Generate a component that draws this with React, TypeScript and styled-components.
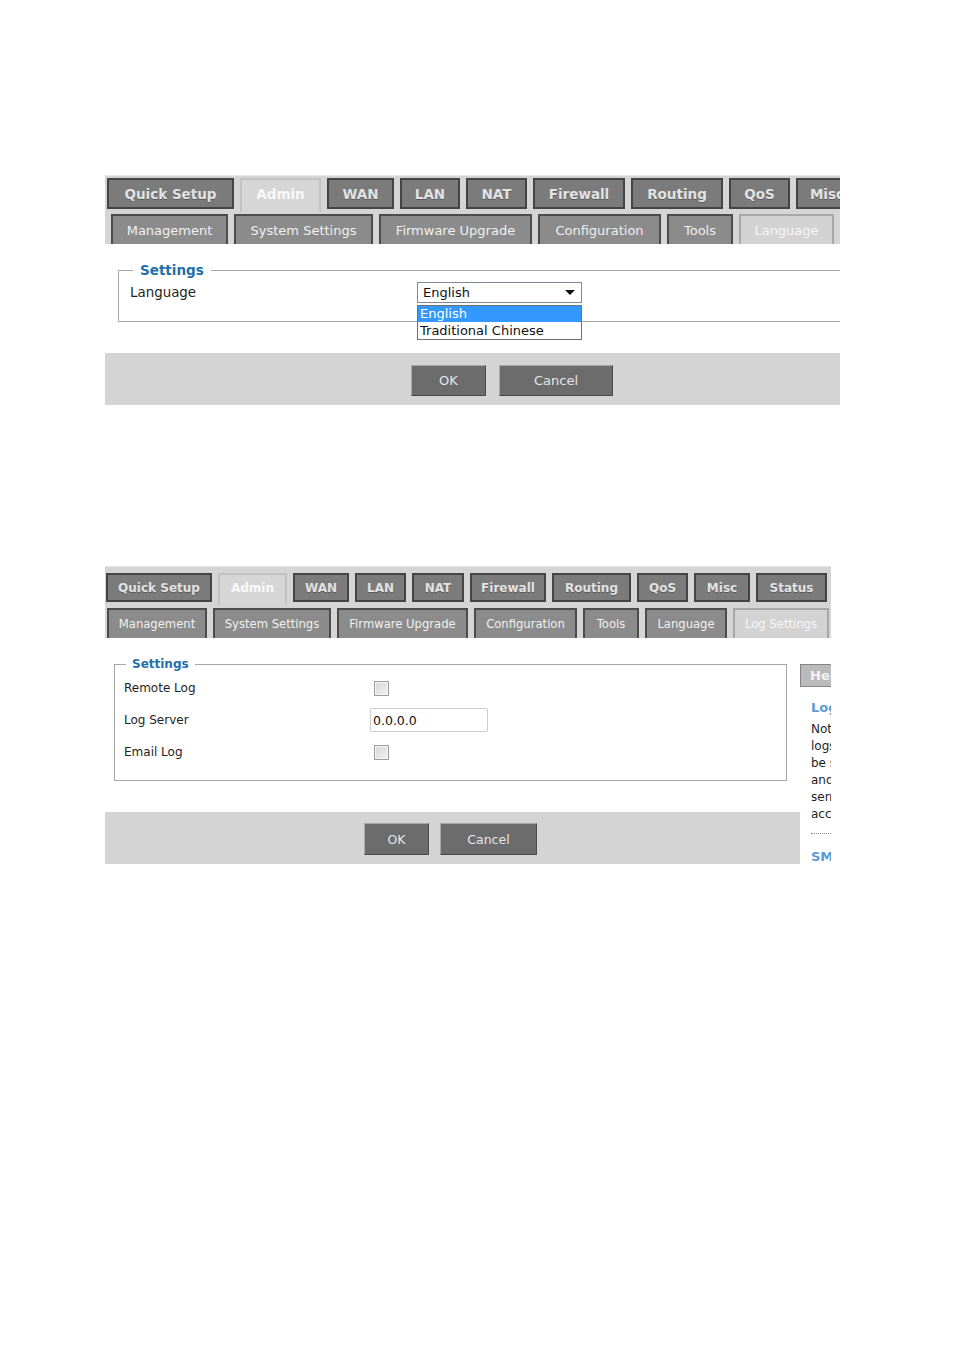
import React from 'react';
import styled, {createGlobalStyle} from 'styled-components';

const GlobalStyle = createGlobalStyle`
  html, body {
    margin: 0;
    padding: 0;
    background: #ffffff;
  }
  body {
    font-family: "DejaVu Sans", Verdana, sans-serif;
    color: #1c1c1c;
  }
`;

type Tab = {label: string; width: number};

type Scale = {
  tabFont: number;
  subFont: number;
  bodyFont: number;
  legendFont: number;
};

const large: Scale = {tabFont: 13.5, subFont: 13, bodyFont: 13.4, legendFont: 13.5};
const small: Scale = {tabFont: 12, subFont: 11.6, bodyFont: 12, legendFont: 12};

const Page = styled.div`
  display: flex;
  flex-direction: column;
  gap: 161px;
  padding: 175px 0 0 105px;
`;

const Panel = styled.section<{$width: number}>`
  width: ${p => p.$width}px;
  overflow: hidden;
`;

const TabStrip = styled.div<{$padTop: number; $gap: number}>`
  display: flex;
  flex-direction: column;
  gap: ${p => p.$gap}px;
  padding-top: ${p => p.$padTop}px;
  background: #d5d5d5;
  border-top: 1px solid #e6e6e6;
`;

const TabRow = styled.div<{$indent: number; $height: number}>`
  display: flex;
  gap: 6px;
  height: ${p => p.$height}px;
  padding-left: ${p => p.$indent}px;
`;

const MainTab = styled.div<{$width: number; $active?: boolean; $font: number}>`
  flex: 0 0 ${p => p.$width}px;
  box-sizing: border-box;
  display: flex;
  align-items: center;
  justify-content: center;
  white-space: nowrap;
  font-size: ${p => p.$font}px;
  font-weight: bold;
  color: ${p => (p.$active ? '#f9f9f9' : '#e2e2e2')};
  background: ${p => (p.$active ? '#d6d6d6' : '#7b7b7b')};
  border: 2px solid ${p => (p.$active ? '#c2c2c2' : '#444444')};
  border-bottom-color: ${p => (p.$active ? '#d6d6d6' : '#444444')};
  padding-bottom: ${p => (p.$active ? 3 : 0)}px;
  margin-bottom: ${p => (p.$active ? -4 : 0)}px;
  text-shadow: ${p => (p.$active ? 'none' : '0 1px 0 #5a5a5a')};
`;

const SubTab = styled.div<{$width: number; $active?: boolean; $font: number}>`
  flex: 0 0 ${p => p.$width}px;
  box-sizing: border-box;
  display: flex;
  align-items: center;
  justify-content: center;
  white-space: nowrap;
  font-size: ${p => p.$font}px;
  color: ${p => (p.$active ? '#f6f6f6' : '#f0f0f0')};
  background: ${p => (p.$active ? '#d3d3d3' : '#8b8b8b')};
  border: 2px solid ${p => (p.$active ? '#a8a8a8' : '#4c4c4c')};
  border-bottom: none;
`;

const Body = styled.div`
  display: flex;
  align-items: flex-start;
`;

const MainColumn = styled.div<{$width: number}>`
  flex: 0 0 ${p => p.$width}px;
`;

const Fieldset = styled.fieldset<{
  $left: number;
  $width: number;
  $top: number;
  $padLeft: number;
  $padBottom: number;
}>`
  box-sizing: border-box;
  width: ${p => p.$width}px;
  min-inline-size: 0;
  margin: ${p => p.$top}px 0 0 ${p => p.$left}px;
  padding: 0 0 ${p => p.$padBottom}px ${p => p.$padLeft}px;
  border: 1px solid #a6a6a6;
`;

const Legend = styled.legend<{$font: number; $offset: number; $pad: number}>`
  margin-left: ${p => p.$offset}px;
  padding: 0 ${p => p.$pad}px;
  font-size: ${p => p.$font}px;
  line-height: 16px;
  font-weight: bold;
  color: #1f70aa;
`;

const FieldRow = styled.div<{$height: number}>`
  display: flex;
  align-items: center;
  height: ${p => p.$height}px;
`;

const FieldLabel = styled.div<{$width: number; $font: number}>`
  flex: 0 0 ${p => p.$width}px;
  font-size: ${p => p.$font}px;
  color: #1e1e1e;
`;

const SelectBox = styled.div`
  position: relative;
  box-sizing: border-box;
  width: 165px;
  height: 21px;
  display: flex;
  align-items: center;
  justify-content: space-between;
  padding: 0 5px 0 5px;
  border: 1px solid #7d8a96;
  background: #ffffff;
  font-size: 13px;
  color: #111;
`;

const Caret = styled.span`
  width: 0;
  height: 0;
  margin-right: 1px;
  border-left: 5px solid transparent;
  border-right: 5px solid transparent;
  border-top: 5px solid #111;
`;

const OptionList = styled.div`
  position: absolute;
  top: 22px;
  left: -1px;
  width: 165px;
  box-sizing: border-box;
  border: 1px solid #707070;
  background: #ffffff;
  z-index: 2;
`;

const OptionItem = styled.div<{$selected?: boolean}>`
  height: ${p => (p.$selected ? 16 : 17)}px;
  line-height: ${p => (p.$selected ? 16 : 17)}px;
  padding-left: 2px;
  font-size: 13px;
  white-space: nowrap;
  color: ${p => (p.$selected ? '#ffffff' : '#111111')};
  background: ${p => (p.$selected ? '#3399ff' : '#ffffff')};
`;

const Checkbox = styled.span`
  box-sizing: border-box;
  width: 15px;
  height: 15px;
  margin-left: 4px;
  border: 1px solid #9c9c9c;
  box-shadow: inset 0 0 0 1px #f4f4f4;
  background: linear-gradient(135deg, #d6d6d6, #f2f2f2);
`;

const TextInput = styled.div`
  box-sizing: border-box;
  width: 118px;
  height: 24px;
  display: flex;
  align-items: center;
  padding-left: 2px;
  border: 1px solid #cdcdcd;
  border-radius: 2px;
  font-size: 12.5px;
  color: #111;
`;

const ButtonBar = styled.div<{$top: number; $padTop: number; $padLeft: number; $gap: number}>`
  display: flex;
  gap: ${p => p.$gap}px;
  height: 52px;
  box-sizing: border-box;
  margin-top: ${p => p.$top}px;
  padding: ${p => p.$padTop}px 0 0 ${p => p.$padLeft}px;
  background: #d4d4d4;
`;

const Button = styled.div<{$width: number; $height: number; $font: number}>`
  box-sizing: border-box;
  width: ${p => p.$width}px;
  height: ${p => p.$height}px;
  display: flex;
  align-items: center;
  justify-content: center;
  font-size: ${p => p.$font}px;
  color: #e6e6e6;
  background: #6c6c6c;
  border: 1px solid;
  border-color: #a8a8a8 #4a4a4a #4a4a4a #a8a8a8;
`;

const HelpColumn = styled.aside`
  flex: 0 0 60px;
  padding-top: 26px;
  font-size: 12px;
`;

const HelpButton = styled.div`
  box-sizing: border-box;
  width: 60px;
  height: 23px;
  padding-left: 9px;
  line-height: 21px;
  font-size: 13px;
  font-weight: bold;
  color: #f4f4f4;
  background: #bababa;
  border: 1px solid #858585;
`;

const HelpTitle = styled.div<{$top: number}>`
  margin-top: ${p => p.$top}px;
  padding-left: 11px;
  line-height: 16px;
  font-size: 13px;
  font-weight: bold;
  color: #5b9bd3;
  white-space: nowrap;
`;

const HelpText = styled.div`
  margin-top: 5px;
  padding-left: 11px;
  line-height: 17px;
  white-space: nowrap;
  color: #1e1e1e;
`;

const HelpRule = styled.div`
  width: 30px;
  margin: 10px 0 0 11px;
  border-top: 1px dotted #8a8a8a;
`;

const mainTabs1: Tab[] = [
  {label: 'Quick Setup', width: 127},
  {label: 'Admin', width: 81},
  {label: 'WAN', width: 67},
  {label: 'LAN', width: 60},
  {label: 'NAT', width: 61},
  {label: 'Firewall', width: 92},
  {label: 'Routing', width: 92},
  {label: 'QoS', width: 61},
  {label: 'Misc', width: 62},
];

const subTabs1: Tab[] = [
  {label: 'Management', width: 117},
  {label: 'System Settings', width: 139},
  {label: 'Firmware Upgrade', width: 153},
  {label: 'Configuration', width: 123},
  {label: 'Tools', width: 66},
  {label: 'Language', width: 95},
];

const mainTabs2: Tab[] = [
  {label: 'Quick Setup', width: 106},
  {label: 'Admin', width: 69},
  {label: 'WAN', width: 56},
  {label: 'LAN', width: 51},
  {label: 'NAT', width: 52},
  {label: 'Firewall', width: 76},
  {label: 'Routing', width: 79},
  {label: 'QoS', width: 51},
  {label: 'Misc', width: 56},
  {label: 'Status', width: 71},
];

const subTabs2: Tab[] = [
  {label: 'Management', width: 100},
  {label: 'System Settings', width: 118},
  {label: 'Firmware Upgrade', width: 131},
  {label: 'Configuration', width: 103},
  {label: 'Tools', width: 56},
  {label: 'Language', width: 82},
  {label: 'Log Settings', width: 96},
];

type TabsProps = {
  main: Tab[];
  sub: Tab[];
  activeMain: string;
  activeSub: string;
  scale: Scale;
  padTop: number;
  gap: number;
  mainHeight: number;
  subHeight: number;
  mainIndent: number;
  subIndent: number;
};

function TabBar(props: TabsProps) {
  const {main, sub, activeMain, activeSub, scale} = props;
  return (
    <TabStrip $padTop={props.padTop} $gap={props.gap}>
      <TabRow $indent={props.mainIndent} $height={props.mainHeight}>
        {main.map(t => (
          <MainTab
            key={t.label}
            $width={t.width}
            $font={scale.tabFont}
            $active={t.label === activeMain}>
            {t.label}
          </MainTab>
        ))}
      </TabRow>
      <TabRow $indent={props.subIndent} $height={props.subHeight}>
        {sub.map(t => (
          <SubTab
            key={t.label}
            $width={t.width}
            $font={scale.subFont}
            $active={t.label === activeSub}>
            {t.label}
          </SubTab>
        ))}
      </TabRow>
    </TabStrip>
  );
}

function LanguagePanel() {
  return (
    <Panel $width={735}>
      <TabBar
        main={mainTabs1}
        sub={subTabs1}
        activeMain="Admin"
        activeSub="Language"
        scale={large}
        padTop={2}
        gap={5}
        mainHeight={31}
        subHeight={30}
        mainIndent={2}
        subIndent={6}
      />
      <Fieldset $left={13} $width={760} $top={18} $padLeft={11} $padBottom={15}>
        <Legend $font={large.legendFont} $offset={3} $pad={7}>
          Settings
        </Legend>
        <FieldRow $height={28}>
          <FieldLabel $width={287} $font={large.bodyFont}>
            Language
          </FieldLabel>
          <SelectBox>
            English
            <Caret />
            <OptionList>
              <OptionItem $selected>English</OptionItem>
              <OptionItem>Traditional Chinese</OptionItem>
            </OptionList>
          </SelectBox>
        </FieldRow>
      </Fieldset>
      <ButtonBar $top={31} $padTop={12} $padLeft={306} $gap={13}>
        <Button $width={75} $height={31} $font={13}>
          OK
        </Button>
        <Button $width={114} $height={31} $font={13}>
          Cancel
        </Button>
      </ButtonBar>
    </Panel>
  );
}

function LogSettingsPanel() {
  return (
    <Panel $width={726}>
      <TabBar
        main={mainTabs2}
        sub={subTabs2}
        activeMain="Admin"
        activeSub="Log Settings"
        scale={small}
        padTop={6}
        gap={6}
        mainHeight={29}
        subHeight={30}
        mainIndent={1}
        subIndent={2}
      />
      <Body>
        <MainColumn $width={695}>
          <Fieldset $left={9} $width={673} $top={18} $padLeft={9} $padBottom={12}>
            <Legend $font={small.legendFont} $offset={2} $pad={6}>
              Settings
            </Legend>
            <FieldRow $height={32}>
              <FieldLabel $width={246} $font={small.bodyFont}>
                Remote Log
              </FieldLabel>
              <Checkbox />
            </FieldRow>
            <FieldRow $height={32}>
              <FieldLabel $width={246} $font={small.bodyFont}>
                Log Server
              </FieldLabel>
              <TextInput>0.0.0.0</TextInput>
            </FieldRow>
            <FieldRow $height={32}>
              <FieldLabel $width={246} $font={small.bodyFont}>
                Email Log
              </FieldLabel>
              <Checkbox />
            </FieldRow>
          </Fieldset>
          <ButtonBar $top={31} $padTop={11} $padLeft={259} $gap={11}>
            <Button $width={65} $height={32} $font={12.5}>
              OK
            </Button>
            <Button $width={97} $height={32} $font={12.5}>
              Cancel
            </Button>
          </ButtonBar>
        </MainColumn>
        <HelpColumn>
          <HelpButton>Help</HelpButton>
          <HelpTitle $top={13}>Log Settings</HelpTitle>
          <HelpText>
            Note: Remote
            <br />
            logs setting will
            <br />
            be saved to
            <br />
            and then be
            <br />
            sent to the email
            <br />
            account.
          </HelpText>
          <HelpRule />
          <HelpTitle $top={15}>SMTP</HelpTitle>
        </HelpColumn>
      </Body>
    </Panel>
  );
}

export default function App() {
  return (
    <>
      <GlobalStyle />
      <Page>
        <LanguagePanel />
        <LogSettingsPanel />
      </Page>
    </>
  );
}
